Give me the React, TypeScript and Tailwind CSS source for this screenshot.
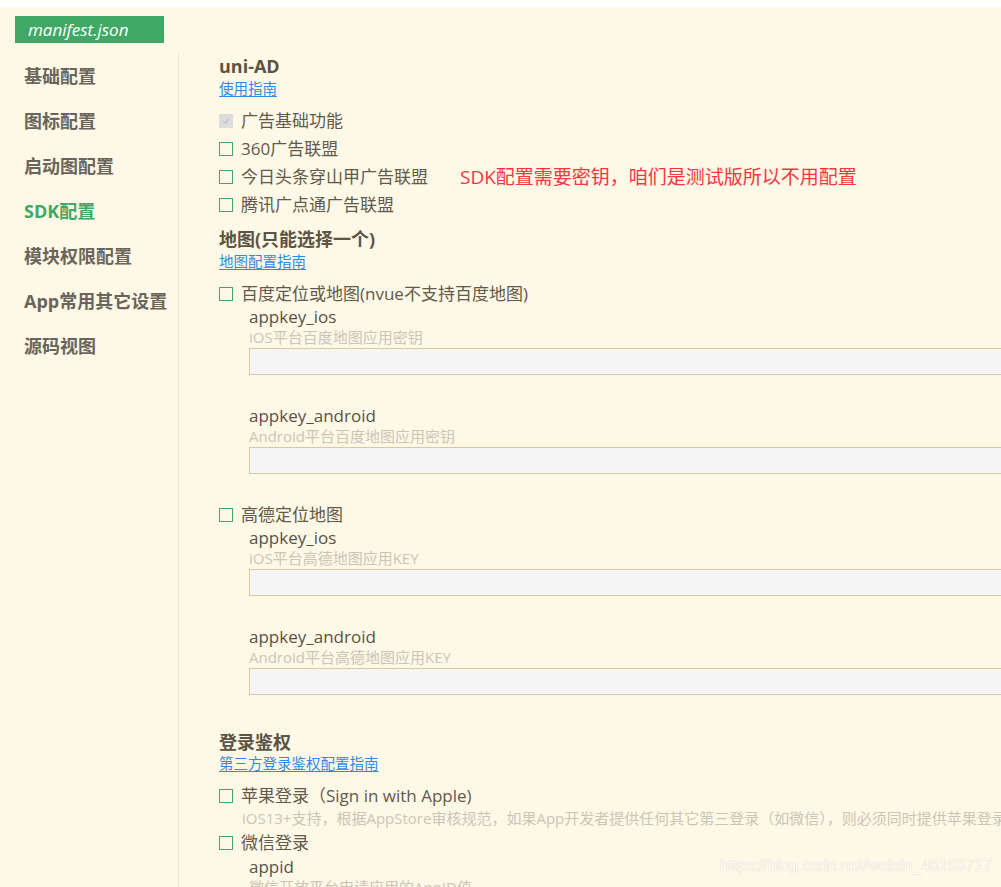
import type { ReactNode } from "react";

const font = "font-['Open_Sans','Noto_Sans_CJK_SC',sans-serif]";

const navItems = ["基础配置", "图标配置", "启动图配置", "SDK配置", "模块权限配置", "App常用其它设置", "源码视图"];

function Box({ checked = false }: { checked?: boolean }) {
  if (checked) {
    return (
      <span className="flex h-[14px] w-[14px] shrink-0 items-center justify-center bg-[#dcdcdc]">
        <svg viewBox="0 0 12 12" className="h-[10px] w-[10px]" fill="none" stroke="#bdbdbd" strokeWidth={1.4}>
          <path d="M2.5 6.2 5 8.5 9.5 3.5" />
        </svg>
      </span>
    );
  }
  return <span className="h-[14px] w-[14px] shrink-0 border border-[#3fa864]" />;
}

function CheckRow({ label, checked, h = "h-[28px]", children }: { label: string; checked?: boolean; h?: string; children?: ReactNode }) {
  return (
    <div className={`flex ${h} items-center`}>
      <Box checked={checked} />
      <span className="ml-[8px] whitespace-nowrap text-[17px] leading-[22px] text-[#62594a]">{label}</span>
      {children}
    </div>
  );
}

function Heading({ children, className = "" }: { children: ReactNode; className?: string }) {
  return <div className={`h-[24px] text-[18px] font-bold leading-[24px] text-[#5b5344] ${className}`}>{children}</div>;
}

function Guide({ children, className = "" }: { children: ReactNode; className?: string }) {
  return (
    <div className={`h-[22px] text-[14.5px] leading-[22px] ${className}`}>
      <a className="text-[#2f8ae5] underline underline-offset-2">{children}</a>
    </div>
  );
}

function KeyField({ label, desc, className = "" }: { label: string; desc: string; className?: string }) {
  return (
    <div className={`pl-[30px] ${className}`}>
      <div className="h-[20px] text-[17px] leading-[20px] text-[#5a5244]">{label}</div>
      <div className="h-[21px] text-[15px] leading-[21px] text-[#cbc5b6]">{desc}</div>
      <div className="h-[27px] w-[800px] border border-r-0 border-[#d8c99f] bg-[#f5f5f5]" />
    </div>
  );
}

export default function App() {
  return (
    <div className={`relative h-[887px] w-[1001px] overflow-hidden bg-[#fef8e7] ${font}`}>
      <div className="h-[7px] bg-white" />
      <div className="pl-[15px] pt-[9px]">
        <div className="flex h-[27px] w-[149px] items-center bg-[#3fa864] pl-[13px] text-[17px] italic text-white">
          manifest.json
        </div>
      </div>

      <div className="mt-[11px] flex h-[840px]">
        {/* sidebar */}
        <div className="w-[179px] shrink-0 border-r border-[#f1e5c6]">
          {navItems.map((n) => (
            <div
              key={n}
              className={`flex h-[45px] items-center pl-[24px] text-[18px] font-bold ${
                n === "SDK配置" ? "text-[#3fa864]" : "text-[#6a655a]"
              }`}
            >
              {n}
            </div>
          ))}
        </div>

        {/* content */}
        <div className="min-w-0 flex-1 pl-[40px]">
          <Heading>uni-AD</Heading>
          <Guide>使用指南</Guide>
          <div className="mt-[7px]">
            <CheckRow label="广告基础功能" checked />
            <CheckRow label="360广告联盟" />
            <CheckRow label="今日头条穿山甲广告联盟">
              <span className="ml-[32px] whitespace-nowrap text-[19px] leading-[22px] text-[#f6363f]">
                SDK配置需要密钥，咱们是测试版所以不用配置
              </span>
            </CheckRow>
            <CheckRow label="腾讯广点通广告联盟" />
          </div>

          <Heading className="mt-[8px]">地图(只能选择一个)</Heading>
          <Guide>地图配置指南</Guide>

          <div className="mt-[7px]">
            <CheckRow label="百度定位或地图(nvue不支持百度地图)" h="h-[27px]" />
            <KeyField label="appkey_ios" desc="iOS平台百度地图应用密钥" />
            <KeyField label="appkey_android" desc="Android平台百度地图应用密钥" className="mt-[31px]" />
          </div>

          <div className="mt-[27px]">
            <CheckRow label="高德定位地图" h="h-[27px]" />
            <KeyField label="appkey_ios" desc="iOS平台高德地图应用KEY" />
            <KeyField label="appkey_android" desc="Android平台高德地图应用KEY" className="mt-[31px]" />
          </div>

          <Heading className="mt-[35px]">登录鉴权</Heading>
          <Guide className="-mt-[1px]">第三方登录鉴权配置指南</Guide>

          <div className="mt-[8px]">
            <CheckRow label="苹果登录（Sign in with Apple)" h="h-[26px]" />
            <div className="h-[18px] whitespace-nowrap pl-[23px] text-[15px] leading-[18px] text-[#cbc5b6]">
              iOS13+支持，根据AppStore审核规范，如果App开发者提供任何其它第三登录（如微信），则必须同时提供苹果登录
            </div>
            <div className="mt-[3px]">
              <CheckRow label="微信登录" h="h-[26px]" />
            </div>
            <div className="mt-[1px] pl-[30px]">
              <div className="h-[20px] text-[17px] leading-[20px] text-[#5a5244]">appid</div>
              <div className="h-[21px] text-[15px] leading-[21px] text-[#cbc5b6]">微信开放平台申请应用的AppID值</div>
            </div>
          </div>
        </div>
      </div>

      {/* watermark */}
      <div className="absolute left-[720px] top-[855px] whitespace-nowrap font-['Liberation_Sans',sans-serif] text-[16px] leading-[22px] text-[#fffdf6] [text-shadow:0_0_1px_#c4beb0]">
        https://blog.csdn.net/weixin_48193717
      </div>
    </div>
  );
}
